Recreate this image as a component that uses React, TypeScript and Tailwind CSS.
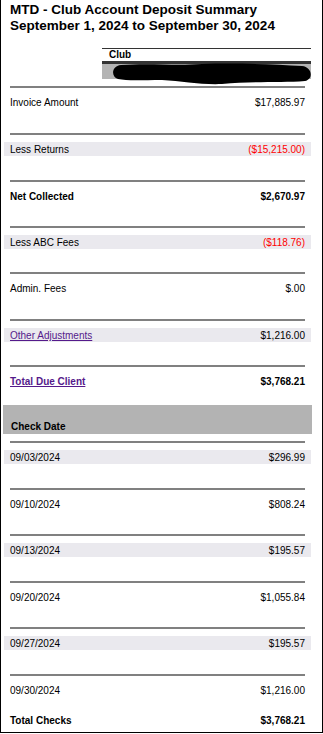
import React from "react";

type RowProps = {
  h: string;
  label: React.ReactNode;
  value: React.ReactNode;
  bg?: boolean;
  bold?: boolean;
  valueCls?: string;
};

function Row({ h, label, value, bg, bold, valueCls }: RowProps) {
  return (
    <div className={h}>
      <div className="ml-[9px] w-[295px] h-[2px] bg-[#808080]" />
      <div
        className={
          "mt-[7px] ml-[3px] w-[307px] h-[14px] leading-[15px] flex justify-between px-[6px] text-[10px] whitespace-nowrap " +
          (bg ? "bg-[#eae9ee] " : "") +
          (bold ? "font-bold" : "")
        }
      >
        <span>{label}</span>
        <span className={valueCls}>{value}</span>
      </div>
    </div>
  );
}

export default function App() {
  return (
    <div className="relative w-[323px] h-[733px] border-x border-b border-black bg-white text-black font-['Liberation_Sans',Arial,sans-serif] overflow-hidden">
      <div className="pt-[2px] pl-[9px] text-[13.5px] leading-[16px] font-bold whitespace-nowrap">
        <div>MTD - Club Account Deposit Summary</div>
        <div>September 1, 2024 to September 30, 2024</div>
      </div>

      <div className="relative mt-[14px] ml-[101px] w-[209px]">
        <div className="border-t border-[#333333] h-[13px] pl-[7px] text-[10px] leading-[12px] font-bold">
          Club
        </div>
        <div className="h-[3px] bg-[#333333]" />
        <div className="h-[15px] bg-[#b4b4b4]" />
        <svg
          className="absolute left-[10px] top-[15px]"
          width="201"
          height="22"
          viewBox="0 0 201 22"
        >
          <path
            d="M9 2 C40 0 62 3 90 1 C122 0 160 1 190 3 C200 4 202 16 193 18 C170 20 140 18 110 21 C90 22 70 18 50 17 C30 17 15 18 6 16 C-1 14 -1 3 9 2 Z"
            fill="#000"
          />
        </svg>
      </div>

      <div className="mt-[7px]">
        <Row h="h-[47px]" label="Invoice Amount" value="$17,885.97" />
        <Row
          h="h-[47px]"
          bg
          label="Less Returns"
          value="($15,215.00)"
          valueCls="text-[#ff0000]"
        />
        <Row h="h-[46px]" bold label="Net Collected" value="$2,670.97" />
        <Row
          h="h-[46px]"
          bg
          label="Less ABC Fees"
          value="($118.76)"
          valueCls="text-[#ff0000]"
        />
        <Row h="h-[47px]" label="Admin. Fees" value="$.00" />
        <Row
          h="h-[46px]"
          bg
          label={<a className="underline text-[#551a8b]">Other Adjustments</a>}
          value="$1,216.00"
        />
        <Row
          h="h-[40px]"
          bold
          label={<a className="underline text-[#551a8b]">Total Due Client</a>}
          value="$3,768.21"
        />
      </div>

      <div className="ml-[2px] w-[309px] h-[29px] bg-[#b3b3b3] flex items-end pl-[8px]">
        <span className="text-[10px] leading-[14px] font-bold">Check Date</span>
      </div>

      <div className="mt-[7px]">
        <Row h="h-[47px]" bg label="09/03/2024" value="$296.99" />
        <Row h="h-[46px]" label="09/10/2024" value="$808.24" />
        <Row h="h-[47px]" bg label="09/13/2024" value="$195.57" />
        <Row h="h-[46px]" label="09/20/2024" value="$1,055.84" />
        <Row h="h-[47px]" bg label="09/27/2024" value="$195.57" />
        <Row h="h-[39px]" label="09/30/2024" value="$1,216.00" />
        <div className="ml-[3px] w-[307px] h-[14px] leading-[15px] flex justify-between px-[6px] text-[10px] font-bold">
          <span>Total Checks</span>
          <span>$3,768.21</span>
        </div>
      </div>
    </div>
  );
}
